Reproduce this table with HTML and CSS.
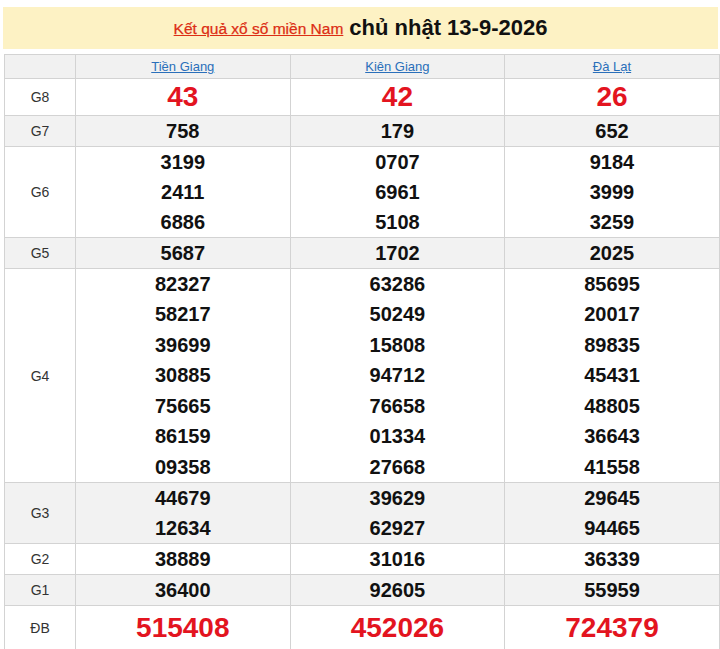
FILE: index.html
```html
<!DOCTYPE html>
<html lang="vi">
<head>
<meta charset="utf-8">
<title>Kết quả xổ số miền Nam</title>
<link rel="stylesheet" href="styles.css">
</head>
<body>
<div class="page">
  <div class="banner">
    <a class="banner-link" href="#">Kết quả xổ số miền Nam</a>
    <span class="banner-date">chủ nhật 13-9-2026</span>
  </div>
  <table class="results">
    <colgroup>
      <col class="c-label"><col class="c-prov"><col class="c-prov"><col class="c-prov">
    </colgroup>
    <thead>
      <tr class="head">
        <th></th>
        <th><a href="#">Tiền Giang</a></th>
        <th><a href="#">Kiên Giang</a></th>
        <th><a href="#">Đà Lạt</a></th>
      </tr>
    </thead>
    <tbody>
      <tr class="g8">
        <td class="label">G8</td>
        <td><div class="n big">43</div></td>
        <td><div class="n big">42</div></td>
        <td><div class="n big">26</div></td>
      </tr>
      <tr class="alt">
        <td class="label">G7</td>
        <td><div class="n">758</div></td>
        <td><div class="n">179</div></td>
        <td><div class="n">652</div></td>
      </tr>
      <tr>
        <td class="label">G6</td>
        <td><div class="n">3199</div><div class="n">2411</div><div class="n">6886</div></td>
        <td><div class="n">0707</div><div class="n">6961</div><div class="n">5108</div></td>
        <td><div class="n">9184</div><div class="n">3999</div><div class="n">3259</div></td>
      </tr>
      <tr class="alt">
        <td class="label">G5</td>
        <td><div class="n">5687</div></td>
        <td><div class="n">1702</div></td>
        <td><div class="n">2025</div></td>
      </tr>
      <tr class="g4">
        <td class="label">G4</td>
        <td><div class="n">82327</div><div class="n">58217</div><div class="n">39699</div><div class="n">30885</div><div class="n">75665</div><div class="n">86159</div><div class="n">09358</div></td>
        <td><div class="n">63286</div><div class="n">50249</div><div class="n">15808</div><div class="n">94712</div><div class="n">76658</div><div class="n">01334</div><div class="n">27668</div></td>
        <td><div class="n">85695</div><div class="n">20017</div><div class="n">89835</div><div class="n">45431</div><div class="n">48805</div><div class="n">36643</div><div class="n">41558</div></td>
      </tr>
      <tr class="alt">
        <td class="label">G3</td>
        <td><div class="n">44679</div><div class="n">12634</div></td>
        <td><div class="n">39629</div><div class="n">62927</div></td>
        <td><div class="n">29645</div><div class="n">94465</div></td>
      </tr>
      <tr>
        <td class="label">G2</td>
        <td><div class="n">38889</div></td>
        <td><div class="n">31016</div></td>
        <td><div class="n">36339</div></td>
      </tr>
      <tr class="alt">
        <td class="label">G1</td>
        <td><div class="n">36400</div></td>
        <td><div class="n">92605</div></td>
        <td><div class="n">55959</div></td>
      </tr>
      <tr class="db">
        <td class="label">ĐB</td>
        <td><div class="n big">515408</div></td>
        <td><div class="n big">452026</div></td>
        <td><div class="n big">724379</div></td>
      </tr>
    </tbody>
  </table>
</div>
</body>
</html>
```
FILE: styles.css
```css
html, body {
  margin: 0;
  padding: 0;
  background: #ffffff;
}

body {
  font-family: "Liberation Sans", Arial, sans-serif;
  color: #111;
}

.page {
  padding: 7px 2px 0 3px;
}

.banner {
  background: #fdf2c4;
  height: 42px;
  display: flex;
  align-items: center;
  justify-content: center;
  gap: 6px;
  margin-bottom: 5px;
}

.banner-link {
  color: #dc2e14;
  font-size: 15.5px;
  text-decoration: underline;
  padding-top: 2px;
  -webkit-text-stroke: 0.25px #dc2e14;
}

.banner-date {
  font-size: 22px;
  font-weight: bold;
  color: #111;
}

.results {
  width: 715px;
  margin-left: 1px;
  border-collapse: collapse;
  table-layout: fixed;
}

.c-label { width: 71px; }
.c-prov { width: 214.6px; }

.results th,
.results td {
  border: 1px solid #d3d3d3;
  padding: 0;
  text-align: center;
  vertical-align: middle;
}

.head th {
  background: #f1f1f1;
  height: 23px;
  font-weight: normal;
  font-size: 13px;
}

.head th a {
  color: #2a6fba;
  text-decoration: underline;
}

.alt td {
  background: #f2f2f2;
}

.label {
  font-size: 14px;
  color: #333;
}

.n {
  font-size: 20px;
  font-weight: bold;
  line-height: 30px;
  color: #111;
}

.g4 .n {
  line-height: 30.43px;
}

.n.big {
  font-size: 28px;
  color: #e3141f;
  line-height: 36px;
}

.db .n.big {
  line-height: 44px;
}
```
